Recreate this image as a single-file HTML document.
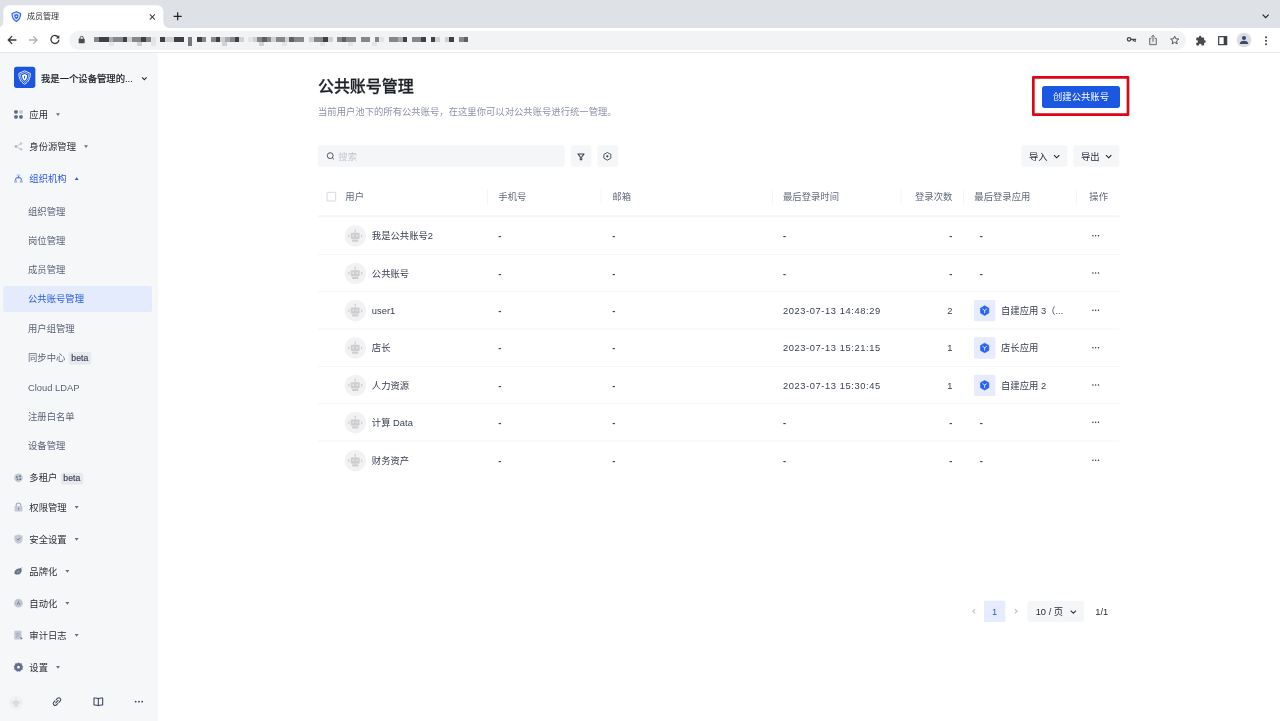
<!DOCTYPE html>
<html>
<head>
<meta charset="utf-8">
<title>成员管理</title>
<style>
*{box-sizing:border-box;margin:0;padding:0}
html,body{width:1280px;height:721px;overflow:hidden;background:#fff}
body{font-family:"Liberation Sans","Noto Sans CJK SC",sans-serif;color:#282d3c}
#stage{position:absolute;left:0;top:0;width:1920px;height:1082px;transform:scale(0.666667);transform-origin:0 0;overflow:hidden;background:#fff;font-size:14px}
.abs{position:absolute}
svg{display:block;overflow:visible}
/* ---------- browser chrome ---------- */
#tabbar{position:absolute;left:0;top:0;width:1920px;height:42px;background:#dee1e6}
#tab{position:absolute;left:5px;top:7.5px;width:240px;height:34.5px;background:#fff;border-radius:9px 9px 0 0}
#tab:before,#tab:after{content:"";position:absolute;bottom:0;width:10px;height:9px}
#tab:before{left:-9px;background:radial-gradient(circle at 0 0,rgba(255,255,255,0) 8.6px,#fff 9.2px)}
#tab:after{right:-9px;background:radial-gradient(circle at 100% 0,rgba(255,255,255,0) 8.6px,#fff 9.2px)}
#tabtitle{position:absolute;left:35.5px;top:9px;font-size:12px;line-height:17px;color:#2f3236;white-space:nowrap}
#toolbar{position:absolute;left:0;top:42px;width:1920px;height:37.2px;background:#fff;border-bottom:1.5px solid #dcdde0;z-index:5}
#urlpill{position:absolute;left:104px;top:4.3px;width:1675px;height:28.7px;border-radius:14.5px;background:#f1f3f4}
.blk{position:absolute;height:3.2px}
/* ---------- sidebar ---------- */
#side{position:absolute;left:0;top:78px;width:237px;height:1004px;background:#f6f7f9}
#logo{position:absolute;left:21px;top:21.7px;width:32px;height:32px;border-radius:4px;background:#1c56df}
#orgname{position:absolute;left:61.5px;top:29.3px;-webkit-text-stroke:0.2px #1d2129;font-size:14px;line-height:22px;font-weight:500;color:#1d2129;white-space:nowrap}
.mi{position:absolute;left:0;width:237px;height:40px;line-height:40px;font-size:14px;color:#2a2e38;white-space:nowrap}
.mi .ic{position:absolute;left:21.3px;top:13.3px;width:13.4px;height:13.4px}
.mi .tx{position:absolute;left:44px;top:0}
.mi .ar{display:inline-block;vertical-align:middle;margin-left:12px;margin-top:-2px;width:0;height:0;border-left:3.5px solid transparent;border-right:3.5px solid transparent;border-top:4.2px solid #66708a}
.mi.on{color:#2a5be0}
.mi.on .ar{border-top:0;border-bottom:4.2px solid #2a5be0}
.si{position:absolute;left:4.5px;width:223.5px;height:39px;line-height:39px;font-size:14px;color:#5a6377;border-radius:3px;white-space:nowrap}
.si .tx{position:absolute;left:37.5px;top:0}
.si.on{background:#e3ebfd;color:#2a5be0}
.beta{display:inline-block;vertical-align:middle;font-style:normal;margin-left:4.5px;margin-top:-1px;height:18.5px;line-height:18.5px;padding:0 4.5px;border-radius:3.5px;background:#e7e9ed;color:#3a4256;font-size:13px;-webkit-text-stroke:0.25px #3a4256}
/* ---------- main ---------- */
#main{position:absolute;left:237px;top:78px;width:1683px;height:1004px;background:#fff}
h1{position:absolute;left:240px;top:34.2px;-webkit-text-stroke:0.4px #1d2129;font-size:24px;line-height:36px;font-weight:500;color:#1d2129;white-space:nowrap;letter-spacing:-0.1px}
#sub{position:absolute;left:240px;top:79px;font-size:14px;line-height:22px;color:#8a92a6;white-space:nowrap}
#redbox{position:absolute;left:1311px;top:36px;width:146px;height:59.5px;border:4px solid #dd0513;border-radius:2px}
#create{position:absolute;left:1326px;top:51px;width:117px;height:32.5px;border-radius:4px;background:#1c57e1;color:#fff;font-size:14px;line-height:32px;text-align:center;white-space:nowrap}
.gbtn{position:absolute;top:140.3px;height:32px;border-radius:4px;background:#f5f6f8}
#search{left:240px;width:370px}
#search span{position:absolute;left:30.5px;top:1.2px;line-height:32px;font-size:14px;color:#c3c7cf}
.dd{font-size:14px;line-height:32px;color:#282d3c;white-space:nowrap}
.dd .t{position:absolute;left:12px;top:1px}
/* table */
#thead{position:absolute;left:240px;top:189px;width:1202px;height:56px;border-bottom:3px solid #f3f5fa;box-sizing:content-box}
.th{position:absolute;top:0.9px;height:55px;line-height:55px;font-size:14px;color:#626b7d;white-space:nowrap}
.sep{position:absolute;top:16.5px;width:1px;height:22px;background:#eef0f4}
.tr{position:absolute;left:240px;width:1202px;height:56px;border-bottom:1px solid #eef0f3}
.td{position:absolute;top:0;height:56px;line-height:56.3px;font-size:14px;color:#394052;white-space:nowrap}
.av{position:absolute;left:40.1px;top:11.5px;width:32px;height:32px;border-radius:50%;background:#f2f2f3}
.appic{position:absolute;left:984px;top:12px;width:32px;height:32px;border-radius:2px;background:#e6ecfd}
.num{letter-spacing:0.88px}
.d{font-weight:700}
</style>
</head>
<body>
<div id="stage">
<!-- CHROME -->
<div id="tabbar">
  <div id="tab">
    <svg class="abs" style="left:11.5px;top:9.5px" width="15" height="16" viewBox="0 0 15 16"><path d="M7.5 0.7L14 3.4C14 8.8 12 13 7.5 15.4C3 13 1 8.8 1 3.4Z" fill="#d5e1ff" stroke="#2a62f5" stroke-width="1.7" stroke-linejoin="round"/><path d="M7.5 4L10.6 5.4C10.5 8.2 9.6 10.4 7.5 12C5.4 10.4 4.5 8.2 4.4 5.4Z" fill="#2a62f5"/><circle cx="7.5" cy="7.6" r="1.2" fill="#e8eeff"/></svg>
    <div id="tabtitle">成员管理</div>
    <svg class="abs" style="left:219px;top:13px" width="9" height="9" viewBox="0 0 9 9"><path d="M0.7 0.7L8.3 8.3M8.3 0.7L0.7 8.3" stroke="#3c4043" stroke-width="1.5" fill="none"/></svg>
  </div>
  <svg class="abs" style="left:259.5px;top:17.5px" width="13" height="13" viewBox="0 0 13 13"><path d="M6.5 0.5V12.5M0.5 6.5H12.5" stroke="#202124" stroke-width="1.8" fill="none"/></svg>
  <svg class="abs" style="left:1892.5px;top:20.5px" width="11" height="7" viewBox="0 0 11 7"><path d="M1 1L5.5 5.5L10 1" stroke="#202124" stroke-width="1.7" fill="none"/></svg>
</div>
<div id="toolbar">
  <svg class="abs" style="left:11px;top:10.8px" width="14" height="14" viewBox="0 0 14 14"><path d="M13.6 7H1.8M7.2 1.2L1.4 7L7.2 12.8" stroke="#36393d" stroke-width="2" fill="none"/></svg>
  <svg class="abs" style="left:43px;top:10.8px" width="14" height="14" viewBox="0 0 14 14"><path d="M0.4 7H12.2M6.8 1.2L12.6 7L6.8 12.8" stroke="#b1b3b6" stroke-width="2" fill="none"/></svg>
  <svg class="abs" style="left:75px;top:10.3px" width="15" height="15" viewBox="0 0 15 15"><path d="M12.5 4A6 6 0 1 0 13.4 7.6" stroke="#36393d" stroke-width="2" fill="none"/><path d="M14 0.6V5.6H9Z" fill="#36393d"/></svg>
  <div id="urlpill">
    <svg class="abs" style="left:13.5px;top:8px" width="9" height="11" viewBox="0 0 9 11"><rect x="0" y="4.2" width="9" height="6.8" rx="1" fill="#4a4d51"/><path d="M2 4.5V3A2.5 2.5 0 0 1 7 3V4.5" stroke="#4a4d51" stroke-width="1.4" fill="none"/></svg>
    <svg class="abs" style="left:0;top:0" width="600" height="29" viewBox="0 0 600 29" shape-rendering="crispEdges" filter="url(#bl)"><defs><filter id="bl"><feGaussianBlur stdDeviation="0.5"/></filter></defs><rect x="37.6" y="9.5" width="7.1" height="7.1" fill="#85878a"/><rect x="44.7" y="9.5" width="7.1" height="7.1" fill="#3e4044"/><rect x="51.7" y="9.5" width="7.1" height="7.1" fill="#3e4044"/><rect x="58.8" y="9.5" width="7.1" height="7.1" fill="#a9abae"/><rect x="65.8" y="9.5" width="7.1" height="7.1" fill="#85878a"/><rect x="72.9" y="9.5" width="7.1" height="7.1" fill="#85878a"/><rect x="79.9" y="9.5" width="7.1" height="7.1" fill="#3e4044"/><rect x="87.0" y="9.5" width="7.1" height="7.1" fill="#cfd1d3"/><rect x="94.0" y="9.5" width="7.1" height="7.1" fill="#85878a"/><rect x="101.1" y="9.5" width="7.1" height="7.1" fill="#85878a"/><rect x="108.1" y="9.5" width="7.1" height="7.1" fill="#3e4044"/><rect x="115.2" y="9.5" width="7.1" height="7.1" fill="#85878a"/><rect x="122.2" y="9.5" width="7.1" height="7.1" fill="#e3e5e6"/><rect x="136.5" y="9.5" width="7.1" height="7.1" fill="#3e4044"/><rect x="143.5" y="9.5" width="7.1" height="7.1" fill="#cfd1d3"/><rect x="150.6" y="9.5" width="7.1" height="7.1" fill="#cfd1d3"/><rect x="157.6" y="9.5" width="7.1" height="7.1" fill="#3e4044"/><rect x="164.7" y="9.5" width="7.1" height="7.1" fill="#3e4044"/><rect x="191.5" y="9.5" width="7.1" height="7.1" fill="#3e4044"/><rect x="198.5" y="9.5" width="7.1" height="7.1" fill="#85878a"/><rect x="212.5" y="9.5" width="7.1" height="7.1" fill="#85878a"/><rect x="219.5" y="9.5" width="7.1" height="7.1" fill="#3e4044"/><rect x="226.6" y="9.5" width="7.1" height="7.1" fill="#cfd1d3"/><rect x="233.6" y="9.5" width="7.1" height="7.1" fill="#a9abae"/><rect x="240.7" y="9.5" width="7.1" height="7.1" fill="#85878a"/><rect x="247.8" y="9.5" width="7.1" height="7.1" fill="#3e4044"/><rect x="254.8" y="9.5" width="7.1" height="7.1" fill="#cfd1d3"/><rect x="268.0" y="9.5" width="7.1" height="7.1" fill="#e3e5e6"/><rect x="275.0" y="9.5" width="7.1" height="7.1" fill="#cfd1d3"/><rect x="282.1" y="9.5" width="7.1" height="7.1" fill="#85878a"/><rect x="289.2" y="9.5" width="7.1" height="7.1" fill="#5e6064"/><rect x="296.2" y="9.5" width="7.1" height="7.1" fill="#85878a"/><rect x="303.2" y="9.5" width="7.1" height="7.1" fill="#cfd1d3"/><rect x="310.3" y="9.5" width="7.1" height="7.1" fill="#85878a"/><rect x="316.0" y="9.5" width="7.1" height="7.1" fill="#85878a"/><rect x="323.0" y="9.5" width="7.1" height="7.1" fill="#cfd1d3"/><rect x="330.1" y="9.5" width="7.1" height="7.1" fill="#5e6064"/><rect x="337.2" y="9.5" width="7.1" height="7.1" fill="#85878a"/><rect x="344.2" y="9.5" width="7.1" height="7.1" fill="#85878a"/><rect x="359.5" y="9.5" width="7.1" height="7.1" fill="#cfd1d3"/><rect x="366.5" y="9.5" width="7.1" height="7.1" fill="#85878a"/><rect x="373.6" y="9.5" width="7.1" height="7.1" fill="#85878a"/><rect x="380.7" y="9.5" width="7.1" height="7.1" fill="#3e4044"/><rect x="387.7" y="9.5" width="7.1" height="7.1" fill="#cfd1d3"/><rect x="401.5" y="9.5" width="7.1" height="7.1" fill="#85878a"/><rect x="408.5" y="9.5" width="7.1" height="7.1" fill="#5e6064"/><rect x="415.6" y="9.5" width="7.1" height="7.1" fill="#85878a"/><rect x="422.7" y="9.5" width="7.1" height="7.1" fill="#85878a"/><rect x="436.8" y="9.5" width="7.1" height="7.1" fill="#85878a"/><rect x="443.8" y="9.5" width="7.1" height="7.1" fill="#85878a"/><rect x="457.8" y="9.5" width="7.1" height="7.1" fill="#85878a"/><rect x="464.8" y="9.5" width="7.1" height="7.1" fill="#e3e5e6"/><rect x="478.9" y="9.5" width="7.1" height="7.1" fill="#85878a"/><rect x="486.0" y="9.5" width="7.1" height="7.1" fill="#85878a"/><rect x="493.0" y="9.5" width="7.1" height="7.1" fill="#a9abae"/><rect x="500.1" y="9.5" width="7.1" height="7.1" fill="#3e4044"/><rect x="514.0" y="9.5" width="7.1" height="7.1" fill="#85878a"/><rect x="521.0" y="9.5" width="7.1" height="7.1" fill="#85878a"/><rect x="528.1" y="9.5" width="7.1" height="7.1" fill="#3e4044"/><rect x="542.2" y="9.5" width="7.1" height="7.1" fill="#3e4044"/><rect x="549.2" y="9.5" width="7.1" height="7.1" fill="#cfd1d3"/><rect x="563.2" y="9.5" width="7.1" height="7.1" fill="#cfd1d3"/><rect x="570.2" y="9.5" width="7.1" height="7.1" fill="#3e4044"/><rect x="584.5" y="9.5" width="7.1" height="7.1" fill="#85878a"/><rect x="591.5" y="9.5" width="7.1" height="7.1" fill="#5e6064"/><rect x="178.0" y="9.5" width="6.6" height="14.1" fill="#77797c"/><rect x="59.5" y="16.6" width="7.1" height="6.0" fill="#e3e5e6"/><rect x="102.2" y="16.6" width="7.1" height="6.0" fill="#cfd1d3"/><rect x="229.0" y="16.6" width="7.1" height="6.0" fill="#cfd1d3"/><rect x="285.2" y="16.6" width="7.1" height="6.0" fill="#cfd1d3"/><rect x="319.0" y="16.6" width="7.1" height="6.0" fill="#e3e5e6"/><rect x="376.0" y="16.6" width="7.1" height="6.0" fill="#e3e5e6"/><rect x="418.0" y="16.6" width="7.1" height="6.0" fill="#e3e5e6"/><rect x="454.0" y="16.6" width="7.1" height="6.0" fill="#e3e5e6"/><rect x="122.5" y="9.5" width="6.8" height="12.8" fill="#e3e5e6"/></svg>
    <!-- key -->
    <svg class="abs" style="left:1586px;top:9px" width="15" height="9" viewBox="0 0 15 9"><circle cx="3.6" cy="4" r="2.6" fill="none" stroke="#46494d" stroke-width="2"/><path d="M6 4H14.2M12.6 4V8M10 4V6.8" stroke="#46494d" stroke-width="2" fill="none"/></svg>
    <!-- share -->
    <svg class="abs" style="left:1619px;top:5.5px" width="13" height="16" viewBox="0 0 13 16"><path d="M4 5.5H1.5V15H11.5V5.5H9" stroke="#5f6368" stroke-width="1.4" fill="#e4e6e8"/><path d="M6.5 10.5V1.2M3.8 3.6L6.5 1L9.2 3.6" stroke="#5f6368" stroke-width="1.4" fill="none"/></svg>
    <!-- star -->
    <svg class="abs" style="left:1651px;top:6.5px" width="14" height="14" viewBox="0 0 14 14"><path d="M7 1.2L8.8 5.2L13.1 5.6L9.8 8.5L10.8 12.8L7 10.5L3.2 12.8L4.2 8.5L0.9 5.6L5.2 5.2Z" stroke="#46494d" stroke-width="1.4" fill="none" stroke-linejoin="round"/></svg>
  </div>
  <!-- puzzle -->
  <svg class="abs" style="left:1794px;top:10.5px" width="16" height="16" viewBox="0 0 16 16"><path d="M6.2 0.8a1.8 1.8 0 0 1 1.8 1.8v0.6h3.2a1 1 0 0 1 1 1v3h0.6a1.9 1.9 0 0 1 0 3.8h-0.6v3.2a1 1 0 0 1-1 1h-3v-0.7a1.9 1.9 0 0 0-3.8 0v0.7h-3a1 1 0 0 1-1-1v-3h0.7a1.9 1.9 0 0 0 0-3.8h-0.7v-3.2a1 1 0 0 1 1-1h3v-0.6a1.8 1.8 0 0 1 1.8-1.8z" fill="#46494d"/></svg>
  <!-- side panel -->
  <svg class="abs" style="left:1827px;top:11.5px" width="14" height="14" viewBox="0 0 14 14"><rect x="1" y="1" width="12" height="12" fill="none" stroke="#3c4043" stroke-width="1.8"/><rect x="8.5" y="1" width="4.5" height="12" fill="#3c4043"/></svg>
  <!-- profile -->
  <svg class="abs" style="left:1855px;top:7px" width="22" height="22" viewBox="0 0 22 22"><circle cx="11" cy="11" r="11" fill="#dadde3"/><circle cx="11" cy="8" r="3.1" fill="#3b4a68"/><path d="M4.8 16.2c0-3 3.6-4 6.2-4s6.2 1 6.2 4v0.8H4.8z" fill="#3b4a68"/></svg>
  <!-- menu dots -->
  <svg class="abs" style="left:1896.5px;top:12px" width="4" height="14" viewBox="0 0 4 14"><circle cx="2" cy="1.7" r="1.5" fill="#3c4043"/><circle cx="2" cy="7" r="1.5" fill="#3c4043"/><circle cx="2" cy="12.3" r="1.5" fill="#3c4043"/></svg>
</div>

<!-- SIDEBAR -->
<div id="side">
  <div id="logo">
    <svg class="abs" style="left:0;top:0" width="32" height="32" viewBox="0 0 32 32"><path d="M15.9 6.2L24.5 10.1C24.5 17.4 22 22.9 15.9 26.4C9.8 22.9 7.3 17.4 7.3 10.1Z" fill="none" stroke="#fff" stroke-width="1.3" stroke-linejoin="round"/><path d="M15.9 8.7L22.2 11.6C22.1 16.9 20.3 21 15.9 23.7C11.5 21 9.7 16.9 9.6 11.6Z" fill="none" stroke="#fff" stroke-width="1" stroke-linejoin="round" opacity=".9"/><path d="M15.9 10.9L19.8 12.7C19.7 16.3 18.6 19.3 15.9 21.3C13.2 19.3 12.1 16.3 12 12.7Z" fill="#fff"/><path d="M15.9 13.2C17.1 14.8 17.1 16.2 15.9 18.6C14.7 16.2 14.7 14.8 15.9 13.2Z" fill="#1c56df"/></svg>
  </div>
  <div id="orgname">我是一个设备管理的...</div>
  <svg class="abs" style="left:211.5px;top:37px" width="9" height="6" viewBox="0 0 9 6"><path d="M1 1L4.5 4.5L8 1" stroke="#282d3c" stroke-width="1.6" fill="none"/></svg>
    <div class="mi" style="top:74px"><svg class="ic" viewBox="0 0 14 14"><rect x="0.3" y="0.3" width="5.6" height="5.6" rx="1.8" fill="#5d6a85"/><rect x="8.1" y="0.3" width="5.6" height="5.6" rx="1.8" fill="#c3c8d4"/><rect x="0.3" y="8.1" width="5.6" height="5.6" rx="1.8" fill="#5d6a85"/><rect x="8.1" y="8.1" width="5.6" height="5.6" rx="1.8" fill="#5d6a85"/></svg><span class="tx">应用<i class="ar"></i></span></div>
  <div class="mi" style="top:122px"><svg class="ic" viewBox="0 0 14 14"><path d="M10.8 2.6L3.2 7L10.8 11.4" stroke="#c0c5d0" stroke-width="1.3" fill="none"/><circle cx="11" cy="2.5" r="2" fill="#c0c5d0"/><circle cx="11" cy="11.5" r="2" fill="#c0c5d0"/><circle cx="3" cy="7" r="2" fill="#aab0be"/></svg><span class="tx">身份源管理<i class="ar"></i></span></div>
  <div class="mi on" style="top:169.6px"><svg class="ic" viewBox="0 0 14 14"><rect x="4.2" y="0.2" width="5.6" height="3.6" rx="1" fill="#b9cbf8"/><path d="M7 3.5V6M2.5 10.5V8.2A2.2 2.2 0 0 1 4.7 6H9.3A2.2 2.2 0 0 1 11.5 8.2V10.5" stroke="#2a5be0" stroke-width="1.5" fill="none"/><rect x="0.2" y="9.8" width="4.6" height="3.8" rx="1" fill="#9db6f5"/><rect x="9.2" y="9.8" width="4.6" height="3.8" rx="1" fill="#9db6f5"/></svg><span class="tx">组织机构<i class="ar"></i></span></div>
  <div class="si" style="top:219.5px"><span class="tx">组织管理</span></div>
  <div class="si" style="top:263.5px"><span class="tx">岗位管理</span></div>
  <div class="si" style="top:307.5px"><span class="tx">成员管理</span></div>
  <div class="si on" style="top:350.8px"><span class="tx" style="top:0.7px">公共账号管理</span></div>
  <div class="si" style="top:395.5px"><span class="tx">用户组管理</span></div>
  <div class="si" style="top:439.5px"><span class="tx">同步中心<i class="beta">beta</i></span></div>
  <div class="si" style="top:483.5px"><span class="tx">Cloud LDAP</span></div>
  <div class="si" style="top:527.5px"><span class="tx">注册白名单</span></div>
  <div class="si" style="top:571.5px"><span class="tx">设备管理</span></div>
  <div class="mi" style="top:619px"><svg class="ic" viewBox="0 0 14 14"><circle cx="7" cy="7" r="6.8" fill="#c3c8d4"/><path d="M3.2 4.6h2.6v2.2H3.2zM8.2 3.4h2.4v2.4H8.2zM4.4 8.6h2v2.4h-2zM8.4 8h2.6v2.4H8.4z" fill="#5d6a85"/></svg><span class="tx">多租户<i class="beta" style="font-style:normal">beta</i></span></div>
  <div class="mi" style="top:663px"><svg class="ic" viewBox="0 0 14 14"><path d="M3.4 6V4.2A3.6 3.6 0 0 1 10.6 4.2V6" stroke="#9ea6b8" stroke-width="1.6" fill="none"/><rect x="0.8" y="5.4" width="12.4" height="8.4" rx="1.4" fill="#c3c8d4"/><rect x="6.3" y="8" width="1.4" height="3" rx="0.7" fill="#5d6a85"/></svg><span class="tx">权限管理<i class="ar"></i></span></div>
  <div class="mi" style="top:711px"><svg class="ic" viewBox="0 0 14 14"><path d="M7 -0.2L13.4 1.6V7C13.4 10.6 10.8 13 7 14.4C3.2 13 0.6 10.6 0.6 7V1.6Z" fill="#c3c8d4"/><path d="M4.4 6.6L6.4 8.6L9.8 5" stroke="#5d6a85" stroke-width="1.4" fill="none"/></svg><span class="tx">安全设置<i class="ar"></i></span></div>
  <div class="mi" style="top:759px"><svg class="ic" viewBox="0 0 14 14"><path d="M0.8 10.8C0.4 6.6 3.6 3 8.6 3L11 1.6C13.6 5.8 11.6 12 5.6 12.4C3.4 12.6 1.4 12.2 0.8 10.8Z" fill="#66718c"/><ellipse cx="6.4" cy="7.8" rx="2.6" ry="2" fill="#8791a8" transform="rotate(-30 6.4 7.8)"/><circle cx="12.2" cy="1.8" r="1.3" fill="#c3c8d4"/></svg><span class="tx">品牌化<i class="ar"></i></span></div>
  <div class="mi" style="top:807px"><svg class="ic" viewBox="0 0 14 14"><circle cx="7" cy="7" r="6.9" fill="#c6cbd6"/><circle cx="7" cy="7" r="4.6" fill="none" stroke="#a9b0c0" stroke-width="0.9"/><path d="M5 9.6L7 4.4L9 9.6M5.7 8H8.3" stroke="#707b95" stroke-width="1.1" fill="none"/></svg><span class="tx">自动化<i class="ar"></i></span></div>
  <div class="mi" style="top:855px"><svg class="ic" viewBox="0 0 14 14"><rect x="0.4" y="0.2" width="11.4" height="13.6" rx="1.4" fill="#c3c8d4"/><path d="M3 4.2H9M3 7H9M3 9.8H6" stroke="#a3abbc" stroke-width="1.3"/><path d="M9.4 10l4.2 1.8l-2.2 2z" fill="#66718c"/></svg><span class="tx">审计日志<i class="ar"></i></span></div>
  <div class="mi" style="top:903px"><svg class="ic" viewBox="0 0 14 14"><path d="M7 0L9.2 1.4L11.8 1.5L12.3 4L14 6L13 8.2L13.3 10.8L10.9 11.6L9.4 13.8L7 13L4.6 13.8L3.1 11.6L0.7 10.8L1 8.2L0 6L1.7 4L2.2 1.5L4.8 1.4Z" fill="#616d89" stroke="#616d89" stroke-width="0.6" stroke-linejoin="round"/><circle cx="7" cy="7" r="2.1" fill="#f6f7f9"/></svg><span class="tx">设置<i class="ar"></i></span></div>
  <!-- bottom icons -->
  <svg class="abs" style="left:13px;top:964.5px" width="22" height="22" viewBox="0 0 22 22"><circle cx="11" cy="11" r="10.8" fill="#f1f2f4"/><rect x="6.2" y="7.6" width="9.6" height="6.4" rx="1.2" fill="#dadcdf"/><rect x="10.4" y="4.6" width="1.2" height="3.2" fill="#dadcdf"/><circle cx="11" cy="4.6" r="0.9" fill="#dadcdf"/><rect x="7.8" y="14.6" width="6.4" height="2.6" rx="0.8" fill="#dadcdf"/><rect x="3.8" y="9.4" width="1.3" height="3" rx="0.5" fill="#dadcdf"/><rect x="16.9" y="9.4" width="1.3" height="3" rx="0.5" fill="#dadcdf"/></svg>
  <svg class="abs" style="left:77.8px;top:967px" width="15" height="15" viewBox="0 0 15 15"><g transform="rotate(-45 7.5 7.5)" fill="none" stroke="#3d4660" stroke-width="1.6" stroke-linecap="round"><path d="M6.3 4.6H3.6A2.9 2.9 0 0 0 3.6 10.4H6.3"/><path d="M8.7 4.6H11.4A2.9 2.9 0 0 1 11.4 10.4H8.7"/><path d="M5 7.5H10"/></g></svg>
  <svg class="abs" style="left:140.2px;top:967.6px" width="15" height="14" viewBox="0 0 15 14"><path d="M7.5 1.8C6.4 0.9 3.6 0.8 1 0.9V11.4C3.6 11.3 6.4 11.5 7.5 12.6C8.6 11.5 11.4 11.3 14 11.4V0.9C11.4 0.8 8.6 0.9 7.5 1.8ZM7.5 1.8V13" stroke="#3d4660" stroke-width="1.6" fill="none" stroke-linejoin="round"/></svg>
  <svg class="abs" style="left:202px;top:972.7px" width="13" height="3" viewBox="0 0 13 3"><circle cx="1.5" cy="1.5" r="1.35" fill="#3d4660"/><circle cx="6.4" cy="1.5" r="1.35" fill="#3d4660"/><circle cx="11.3" cy="1.5" r="1.35" fill="#3d4660"/></svg>
</div>

<!-- MAIN -->
<div id="main">
  <h1>公共账号管理</h1>
  <div id="sub">当前用户池下的所有公共账号，在这里你可以对公共账号进行统一管理。</div>
  <div id="redbox"></div>
  <div id="create">创建公共账号</div>
  <div class="gbtn" id="search"><svg class="abs" style="left:12.5px;top:10px" width="12" height="12" viewBox="0 0 12 12"><circle cx="5.3" cy="5.5" r="4.4" stroke="#394052" stroke-width="1.3" fill="none"/><path d="M8.6 8.8L11 11.2" stroke="#394052" stroke-width="1.3"/></svg><span>搜索</span></div>
  <div class="gbtn" style="left:618.7px;width:31.5px"><svg class="abs" style="left:10.3px;top:11.4px" width="11" height="11" viewBox="0 0 11 11"><path d="M0.8 0.9H10.2L6.6 5.4V9.8H4.4V5.4Z" stroke="#394052" stroke-width="1.5" fill="none" stroke-linejoin="round"/></svg></div>
  <div class="gbtn" style="left:658.5px;width:31.5px"><svg class="abs" style="left:9.8px;top:9.6px" width="12" height="13" viewBox="0 0 12 13"><path d="M6 0.8L11.2 3.6V9.4L6 12.2L0.8 9.4V3.6Z" stroke="#394052" stroke-width="1.3" fill="none" stroke-linejoin="round"/><circle cx="6" cy="6.5" r="1.7" fill="#394052"/></svg></div>
  <div class="gbtn dd" style="left:1294.5px;width:69.5px"><span class="t">导入</span><svg class="abs" style="left:48px;top:13.5px" width="10" height="6" viewBox="0 0 10 6"><path d="M1 0.8L5 4.8L9 0.8" stroke="#1d2129" stroke-width="1.6" fill="none"/></svg></div>
  <div class="gbtn dd" style="left:1372.5px;width:69.5px"><span class="t">导出</span><svg class="abs" style="left:48px;top:13.5px" width="10" height="6" viewBox="0 0 10 6"><path d="M1 0.8L5 4.8L9 0.8" stroke="#1d2129" stroke-width="1.6" fill="none"/></svg></div>
  <div id="thead">
    <div class="abs" style="left:13.2px;top:21.2px;width:13.4px;height:13.4px;border:1.4px solid #c2c6ce;border-radius:1.5px;background:#fff"></div>
    <div class="th" style="left:41px">用户</div>
    <div class="sep" style="left:254px"></div>
    <div class="th" style="left:270.5px">手机号</div>
    <div class="sep" style="left:424px"></div>
    <div class="th" style="left:441.5px">邮箱</div>
    <div class="sep" style="left:681px"></div>
    <div class="th" style="left:697.5px">最后登录时间</div>
    <div class="sep" style="left:874px"></div>
    <div class="th" style="right:250.5px">登录次数</div>
    <div class="sep" style="left:967.5px"></div>
    <div class="th" style="left:984.5px">最后登录应用</div>
    <div class="sep" style="left:1137px"></div>
    <div class="th" style="left:1157px">操作</div>
  </div>
  <div class="tr" style="top:248px"><div class="av"><svg class="abs" style="left:0.4px;top:0.6px" width="31" height="31" viewBox="0 0 31 31"><rect x="9" y="11.2" width="13.5" height="9.4" rx="1.6" fill="#cdced1"/><rect x="15.1" y="7" width="1.4" height="4.4" fill="#cdced1"/><circle cx="15.8" cy="6.8" r="1.1" fill="#cdced1"/><rect x="11.2" y="21.4" width="9.2" height="3.2" rx="0.9" fill="#cdced1"/><rect x="5.3" y="13.8" width="1.7" height="4.4" rx="0.7" fill="#cdced1"/><rect x="24.5" y="13.8" width="1.7" height="4.4" rx="0.7" fill="#cdced1"/><circle cx="12.9" cy="15.4" r="1.25" fill="#f0f0f1"/><circle cx="18.7" cy="15.4" r="1.25" fill="#f0f0f1"/></svg></div><div class="td" style="left:80.8px">我是公共账号2</div><div class="td d" style="left:270.5px">-</div><div class="td d" style="left:441.5px">-</div><div class="td d" style="left:697.5px">-</div><div class="td d" style="right:250.5px">-</div><div class="td d" style="left:992.5px">-</div><svg class="abs" style="left:1161px;top:25.5px" width="11" height="3" viewBox="0 0 11 3"><circle cx="1.3" cy="1.5" r="1.1" fill="#282d3c"/><circle cx="5.5" cy="1.5" r="1.1" fill="#282d3c"/><circle cx="9.7" cy="1.5" r="1.1" fill="#282d3c"/></svg></div>
  <div class="tr" style="top:304px"><div class="av"><svg class="abs" style="left:0.4px;top:0.6px" width="31" height="31" viewBox="0 0 31 31"><rect x="9" y="11.2" width="13.5" height="9.4" rx="1.6" fill="#cdced1"/><rect x="15.1" y="7" width="1.4" height="4.4" fill="#cdced1"/><circle cx="15.8" cy="6.8" r="1.1" fill="#cdced1"/><rect x="11.2" y="21.4" width="9.2" height="3.2" rx="0.9" fill="#cdced1"/><rect x="5.3" y="13.8" width="1.7" height="4.4" rx="0.7" fill="#cdced1"/><rect x="24.5" y="13.8" width="1.7" height="4.4" rx="0.7" fill="#cdced1"/><circle cx="12.9" cy="15.4" r="1.25" fill="#f0f0f1"/><circle cx="18.7" cy="15.4" r="1.25" fill="#f0f0f1"/></svg></div><div class="td" style="left:80.8px">公共账号</div><div class="td d" style="left:270.5px">-</div><div class="td d" style="left:441.5px">-</div><div class="td d" style="left:697.5px">-</div><div class="td d" style="right:250.5px">-</div><div class="td d" style="left:992.5px">-</div><svg class="abs" style="left:1161px;top:25.5px" width="11" height="3" viewBox="0 0 11 3"><circle cx="1.3" cy="1.5" r="1.1" fill="#282d3c"/><circle cx="5.5" cy="1.5" r="1.1" fill="#282d3c"/><circle cx="9.7" cy="1.5" r="1.1" fill="#282d3c"/></svg></div>
  <div class="tr" style="top:360px"><div class="av"><svg class="abs" style="left:0.4px;top:0.6px" width="31" height="31" viewBox="0 0 31 31"><rect x="9" y="11.2" width="13.5" height="9.4" rx="1.6" fill="#cdced1"/><rect x="15.1" y="7" width="1.4" height="4.4" fill="#cdced1"/><circle cx="15.8" cy="6.8" r="1.1" fill="#cdced1"/><rect x="11.2" y="21.4" width="9.2" height="3.2" rx="0.9" fill="#cdced1"/><rect x="5.3" y="13.8" width="1.7" height="4.4" rx="0.7" fill="#cdced1"/><rect x="24.5" y="13.8" width="1.7" height="4.4" rx="0.7" fill="#cdced1"/><circle cx="12.9" cy="15.4" r="1.25" fill="#f0f0f1"/><circle cx="18.7" cy="15.4" r="1.25" fill="#f0f0f1"/></svg></div><div class="td" style="left:80.8px">user1</div><div class="td d" style="left:270.5px">-</div><div class="td d" style="left:441.5px">-</div><div class="td num" style="left:697.5px">2023-07-13 14:48:29</div><div class="td" style="right:250.5px">2</div><div class="appic"><svg class="abs" style="left:9px;top:8px" width="14" height="16" viewBox="0 0 14 16"><path d="M7 0.7L13.2 4.2V11.6L7 15.1L0.8 11.6V4.2Z" fill="#2a62f5" stroke="#2a62f5" stroke-width="1" stroke-linejoin="round"/><path d="M4.2 5.6L7 7.7L9.8 5.6M7 7.7V11.2" stroke="#fff" stroke-width="1.2" fill="none" stroke-linecap="round"/></svg></div><div class="td" style="left:1024.5px">自建应用 3（...</div><svg class="abs" style="left:1161px;top:25.5px" width="11" height="3" viewBox="0 0 11 3"><circle cx="1.3" cy="1.5" r="1.1" fill="#282d3c"/><circle cx="5.5" cy="1.5" r="1.1" fill="#282d3c"/><circle cx="9.7" cy="1.5" r="1.1" fill="#282d3c"/></svg></div>
  <div class="tr" style="top:416px"><div class="av"><svg class="abs" style="left:0.4px;top:0.6px" width="31" height="31" viewBox="0 0 31 31"><rect x="9" y="11.2" width="13.5" height="9.4" rx="1.6" fill="#cdced1"/><rect x="15.1" y="7" width="1.4" height="4.4" fill="#cdced1"/><circle cx="15.8" cy="6.8" r="1.1" fill="#cdced1"/><rect x="11.2" y="21.4" width="9.2" height="3.2" rx="0.9" fill="#cdced1"/><rect x="5.3" y="13.8" width="1.7" height="4.4" rx="0.7" fill="#cdced1"/><rect x="24.5" y="13.8" width="1.7" height="4.4" rx="0.7" fill="#cdced1"/><circle cx="12.9" cy="15.4" r="1.25" fill="#f0f0f1"/><circle cx="18.7" cy="15.4" r="1.25" fill="#f0f0f1"/></svg></div><div class="td" style="left:80.8px">店长</div><div class="td d" style="left:270.5px">-</div><div class="td d" style="left:441.5px">-</div><div class="td num" style="left:697.5px">2023-07-13 15:21:15</div><div class="td" style="right:250.5px">1</div><div class="appic"><svg class="abs" style="left:9px;top:8px" width="14" height="16" viewBox="0 0 14 16"><path d="M7 0.7L13.2 4.2V11.6L7 15.1L0.8 11.6V4.2Z" fill="#2a62f5" stroke="#2a62f5" stroke-width="1" stroke-linejoin="round"/><path d="M4.2 5.6L7 7.7L9.8 5.6M7 7.7V11.2" stroke="#fff" stroke-width="1.2" fill="none" stroke-linecap="round"/></svg></div><div class="td" style="left:1024.5px">店长应用</div><svg class="abs" style="left:1161px;top:25.5px" width="11" height="3" viewBox="0 0 11 3"><circle cx="1.3" cy="1.5" r="1.1" fill="#282d3c"/><circle cx="5.5" cy="1.5" r="1.1" fill="#282d3c"/><circle cx="9.7" cy="1.5" r="1.1" fill="#282d3c"/></svg></div>
  <div class="tr" style="top:472px"><div class="av"><svg class="abs" style="left:0.4px;top:0.6px" width="31" height="31" viewBox="0 0 31 31"><rect x="9" y="11.2" width="13.5" height="9.4" rx="1.6" fill="#cdced1"/><rect x="15.1" y="7" width="1.4" height="4.4" fill="#cdced1"/><circle cx="15.8" cy="6.8" r="1.1" fill="#cdced1"/><rect x="11.2" y="21.4" width="9.2" height="3.2" rx="0.9" fill="#cdced1"/><rect x="5.3" y="13.8" width="1.7" height="4.4" rx="0.7" fill="#cdced1"/><rect x="24.5" y="13.8" width="1.7" height="4.4" rx="0.7" fill="#cdced1"/><circle cx="12.9" cy="15.4" r="1.25" fill="#f0f0f1"/><circle cx="18.7" cy="15.4" r="1.25" fill="#f0f0f1"/></svg></div><div class="td" style="left:80.8px">人力资源</div><div class="td d" style="left:270.5px">-</div><div class="td d" style="left:441.5px">-</div><div class="td num" style="left:697.5px">2023-07-13 15:30:45</div><div class="td" style="right:250.5px">1</div><div class="appic"><svg class="abs" style="left:9px;top:8px" width="14" height="16" viewBox="0 0 14 16"><path d="M7 0.7L13.2 4.2V11.6L7 15.1L0.8 11.6V4.2Z" fill="#2a62f5" stroke="#2a62f5" stroke-width="1" stroke-linejoin="round"/><path d="M4.2 5.6L7 7.7L9.8 5.6M7 7.7V11.2" stroke="#fff" stroke-width="1.2" fill="none" stroke-linecap="round"/></svg></div><div class="td" style="left:1024.5px">自建应用 2</div><svg class="abs" style="left:1161px;top:25.5px" width="11" height="3" viewBox="0 0 11 3"><circle cx="1.3" cy="1.5" r="1.1" fill="#282d3c"/><circle cx="5.5" cy="1.5" r="1.1" fill="#282d3c"/><circle cx="9.7" cy="1.5" r="1.1" fill="#282d3c"/></svg></div>
  <div class="tr" style="top:528px"><div class="av"><svg class="abs" style="left:0.4px;top:0.6px" width="31" height="31" viewBox="0 0 31 31"><rect x="9" y="11.2" width="13.5" height="9.4" rx="1.6" fill="#cdced1"/><rect x="15.1" y="7" width="1.4" height="4.4" fill="#cdced1"/><circle cx="15.8" cy="6.8" r="1.1" fill="#cdced1"/><rect x="11.2" y="21.4" width="9.2" height="3.2" rx="0.9" fill="#cdced1"/><rect x="5.3" y="13.8" width="1.7" height="4.4" rx="0.7" fill="#cdced1"/><rect x="24.5" y="13.8" width="1.7" height="4.4" rx="0.7" fill="#cdced1"/><circle cx="12.9" cy="15.4" r="1.25" fill="#f0f0f1"/><circle cx="18.7" cy="15.4" r="1.25" fill="#f0f0f1"/></svg></div><div class="td" style="left:80.8px">计算 Data</div><div class="td d" style="left:270.5px">-</div><div class="td d" style="left:441.5px">-</div><div class="td d" style="left:697.5px">-</div><div class="td d" style="right:250.5px">-</div><div class="td d" style="left:992.5px">-</div><svg class="abs" style="left:1161px;top:25.5px" width="11" height="3" viewBox="0 0 11 3"><circle cx="1.3" cy="1.5" r="1.1" fill="#282d3c"/><circle cx="5.5" cy="1.5" r="1.1" fill="#282d3c"/><circle cx="9.7" cy="1.5" r="1.1" fill="#282d3c"/></svg></div>
  <div class="tr" style="top:585.3px;border-bottom:0"><div class="av"><svg class="abs" style="left:0.4px;top:0.6px" width="31" height="31" viewBox="0 0 31 31"><rect x="9" y="11.2" width="13.5" height="9.4" rx="1.6" fill="#cdced1"/><rect x="15.1" y="7" width="1.4" height="4.4" fill="#cdced1"/><circle cx="15.8" cy="6.8" r="1.1" fill="#cdced1"/><rect x="11.2" y="21.4" width="9.2" height="3.2" rx="0.9" fill="#cdced1"/><rect x="5.3" y="13.8" width="1.7" height="4.4" rx="0.7" fill="#cdced1"/><rect x="24.5" y="13.8" width="1.7" height="4.4" rx="0.7" fill="#cdced1"/><circle cx="12.9" cy="15.4" r="1.25" fill="#f0f0f1"/><circle cx="18.7" cy="15.4" r="1.25" fill="#f0f0f1"/></svg></div><div class="td" style="left:80.8px">财务资产</div><div class="td d" style="left:270.5px">-</div><div class="td d" style="left:441.5px">-</div><div class="td d" style="left:697.5px">-</div><div class="td d" style="right:250.5px">-</div><div class="td d" style="left:992.5px">-</div><svg class="abs" style="left:1161px;top:25.5px" width="11" height="3" viewBox="0 0 11 3"><circle cx="1.3" cy="1.5" r="1.1" fill="#282d3c"/><circle cx="5.5" cy="1.5" r="1.1" fill="#282d3c"/><circle cx="9.7" cy="1.5" r="1.1" fill="#282d3c"/></svg></div>
  <div id="pager">
    <svg class="abs" style="left:1220.5px;top:835.3px" width="6" height="8" viewBox="0 0 6 8"><path d="M4.8 0.8L1.4 4L4.8 7.2" stroke="#b9bec8" stroke-width="1.6" fill="none"/></svg>
    <div class="abs" style="left:1239px;top:823px;width:32px;height:32px;line-height:32px;text-align:center;background:#e6ecfd;color:#2a5be0;border-radius:2px;font-size:14px">1</div>
    <svg class="abs" style="left:1284px;top:835.3px" width="6" height="8" viewBox="0 0 6 8"><path d="M1.2 0.8L4.6 4L1.2 7.2" stroke="#b9bec8" stroke-width="1.6" fill="none"/></svg>
    <div class="abs" style="left:1303.5px;top:823px;width:85.5px;height:32px;line-height:32px;background:#f5f6f8;border-radius:4px;font-size:14px;color:#282d3c;white-space:nowrap"><span class="abs" style="left:13px;top:0">10 / 页</span><svg class="abs" style="left:64px;top:13.5px" width="10" height="6" viewBox="0 0 10 6"><path d="M1 0.8L5 4.8L9 0.8" stroke="#2d3550" stroke-width="1.6" fill="none"/></svg></div>
    <div class="abs" style="left:1406px;top:823px;line-height:32px;font-size:14px;color:#282d3c">1/1</div>
  </div>
</div>
</div>
</body>
</html>
